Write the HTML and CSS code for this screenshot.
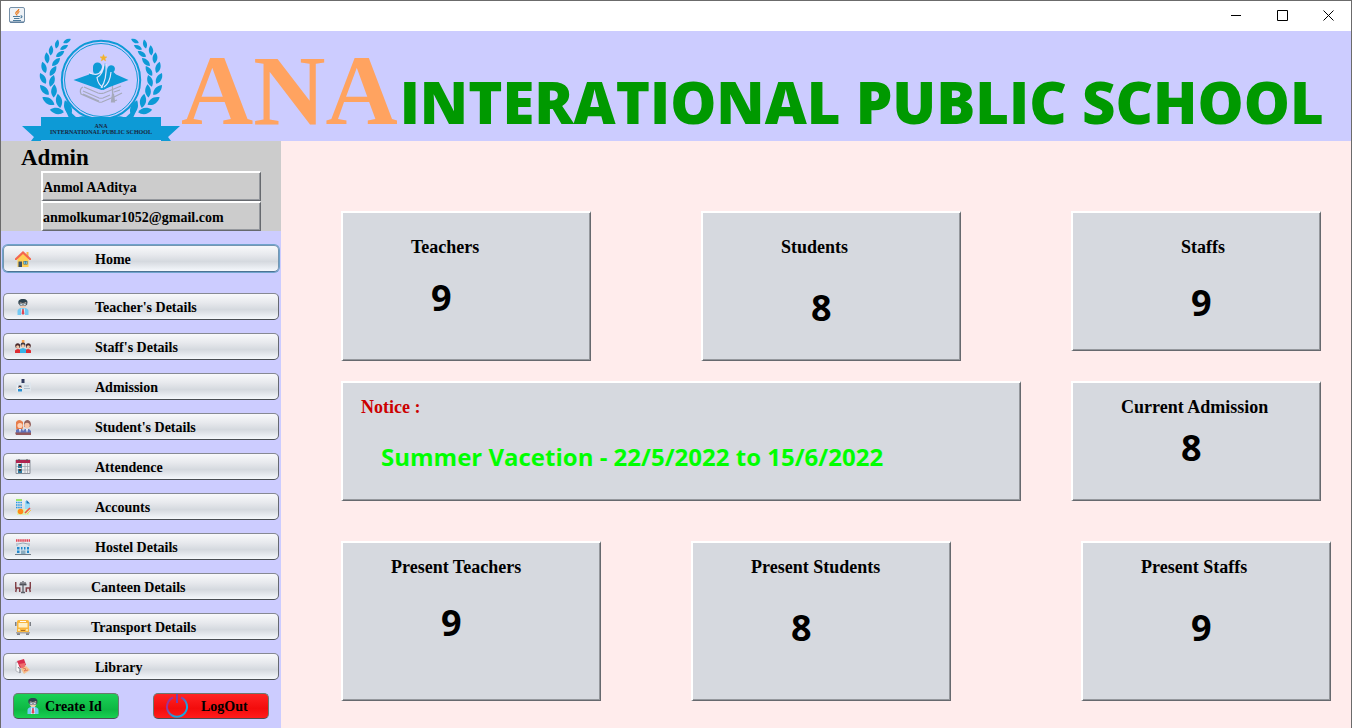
FILE: index.html
```html
<!DOCTYPE html>
<html lang="en">
<head>
<meta charset="utf-8">
<title>ANA Interational Public School</title>
<link rel="stylesheet" href="styles.css">
</head>
<body>
<div class="window">
  <div class="titlebar">
    <svg class="app-icon" viewBox="0 0 16 16" aria-hidden="true">
      <rect x=".5" y=".5" width="15" height="15" rx="1.5" fill="#eef2f6" stroke="#7690a8"/>
      <path d="M1 15h14" stroke="#4f7394" stroke-width="1"/>
      <path d="M9.8 2C10 4 6.500 4.500 6.800 6.200 7 7.200 8 7.600 8 8.600M10.500 4.500C8.500 5.300 8.500 6 9 7" fill="none" stroke="#e8791d" stroke-width="1.200"/>
      <path d="M4 9.500h7M5 11.500h5.500M4 13.500h8M11.500 9c2-.6 2 1.500 0 2" fill="none" stroke="#4d7b9c" stroke-width="1.100"/>
    </svg>
    <div class="window-controls">
      <button type="button" aria-label="Minimize"><svg viewBox="0 0 11 11"><path d="M0 5.500h10"/></svg></button>
      <button type="button" aria-label="Maximize"><svg viewBox="0 0 11 11"><path d="M.5 .5h10v10h-10z"/></svg></button>
      <button type="button" aria-label="Close"><svg viewBox="0 0 11 11"><path d="M.5 .5l10 10M10.500 .5l-10 10"/></svg></button>
    </div>
  </div>

  <header class="banner">
    <svg class="logo" viewBox="20 31 161 110" role="img" aria-label="School crest">
      <defs>
        <path id="leaf" d="M0-5.200C3.200-1.500 2.600 2.500 0 5 -2.600 2.500-3.200-1.500 0-5.200z"/>
        <g id="branch" fill="#0d9ad6">
          <use href="#leaf" transform="translate(67 41) rotate(62) scale(.85)"/>
          <use href="#leaf" transform="translate(57 44) rotate(12) scale(.9)"/>
          <use href="#leaf" transform="translate(64 47.500) rotate(62) scale(.9)"/>
          <use href="#leaf" transform="translate(51 50.500) rotate(5) scale(1)"/>
          <use href="#leaf" transform="translate(60 54) rotate(55) scale(1)"/>
          <use href="#leaf" transform="translate(47 58) rotate(-6) scale(1.100)"/>
          <use href="#leaf" transform="translate(56 62) rotate(45) scale(1.100)"/>
          <use href="#leaf" transform="translate(44 67.500) rotate(-16) scale(1.150)"/>
          <use href="#leaf" transform="translate(53 71) rotate(33) scale(1.150)"/>
          <use href="#leaf" transform="translate(43 78.500) rotate(-28) scale(1.200)"/>
          <use href="#leaf" transform="translate(52 81) rotate(18) scale(1.200)"/>
          <use href="#leaf" transform="translate(44.500 90) rotate(-42) scale(1.300)"/>
          <use href="#leaf" transform="translate(54 91) rotate(4) scale(1.300)"/>
          <use href="#leaf" transform="translate(48.500 101) rotate(-58) scale(1.400)"/>
          <use href="#leaf" transform="translate(59 101) rotate(-10) scale(1.400)"/>
          <use href="#leaf" transform="translate(57 111) rotate(-80) scale(1.400)"/>
          <use href="#leaf" transform="translate(68 108) rotate(-22) scale(1.600)"/>
          <path d="M64 105q7 8 13 13h-8q-3-6-5-13zM77 118q4-3 9-1z"/>
        </g>
      </defs>
      <use href="#branch"/>
      <use href="#branch" transform="translate(202 0) scale(-1 1)"/>
      <circle cx="101" cy="80" r="39.200" fill="#ccf" stroke="#0d9ad6" stroke-width="2"/>
      <circle cx="101" cy="80" r="36.500" fill="none" stroke="#0d9ad6" stroke-width="1"/>
      <g fill="none" stroke="#a5a9bb" stroke-width="1.200">
        <path d="M83 87q-4 2-2 7l18 8q1 .5 3 0l14-6M84 87l14 6q3 1 6 0l17-7M83 91l16 7q2 .5 4 0l7-3M83 94l16 7M114 97l8-4M114 92l6-2M114 101l3-1"/>
        <path d="M112.500 85v9l-1 8h3l-1-8" fill="#a5a9bb"/>
      </g>
      <path d="M73.500 80l17-6 8-1 12-1 18 8-27 10z" fill="#0d9ad6"/>
      <path d="M93 67a4.500 4.500 0 0 1 9 0q0 3-3 5 4-1 6-9 2 6 1.500 9l1-4a3.800 3.800 0 1 1 6 4q3 2 3 5-2 8-13 13-10-3-9-10-6 0-5.500-7 2 3 5 1-1.500-3-1-7z" fill="#0d9ad6"/>
      <path d="M89 72.500q12 6 15-8-1 10-7 13 1 7 6 10M106 64q1 16-5 24M111 72q-1 11-7 15" fill="none" stroke="#e3e6ff" stroke-width="1.200"/>
      <path d="M103.500 54.500l1 2.300 2.400.1-1.900 1.600.7 2.400-2.200-1.300-2.200 1.300.7-2.400-1.900-1.600 2.400-.1z" fill="#f2b32e" stroke="#f2b32e" stroke-width=".5"/>
      <path d="M22 126h19v15H31l3-4zM180 126h-19v15h10l-3-4zM41 117h120v23H41z" fill="#0d9ad6"/>
      <g class="logo-text" fill="#1a2540" text-anchor="middle">
        <text x="101" y="128">ANA</text>
        <text x="101" y="134">INTERNATIONAL PUBLIC SCHOOL</text>
      </g>
    </svg>
    <h1 class="school-name"><span class="school-short">ANA</span><span class="school-long">INTERATIONAL PUBLIC SCHOOL</span></h1>
  </header>

  <div class="body">
    <aside class="sidebar">
      <section class="profile">
        <h2>Admin</h2>
        <div class="profile-field">Anmol AAditya</div>
        <div class="profile-field">anmolkumar1052@gmail.com</div>
      </section>

      <nav class="menu">
        <button type="button" class="nav-button current"><svg viewBox="0 0 16 16"><path d="M2.500 7.500v8.500h11V7.500L8 2z" fill="#ffcf55"/><path d="M11.500 1h2v5h-2z" fill="#f9b84a"/><path d="M0 9V7.500L8 0l8 7.500V9h-1.500L8 3 1.500 9z" fill="#f4674e"/><path d="M3.500 10.500h3.500V16H3.500z" fill="#3c5366"/><path d="M8.500 10h4v3.500h-4z" fill="#3f6578"/><path d="M9 10.500h1.300v2.500H9zM10.800 10.500h1.300v2.500h-1.300z" fill="#72bdd8"/></svg><span>Home</span></button>
        <button type="button" class="nav-button"><svg viewBox="0 0 16 16"><use href="#person"/></svg><span>Teacher's Details</span></button>
        <button type="button" class="nav-button"><svg viewBox="0 0 16 16"><path d="M6.800 1h2.600v3H6.800z" fill="#f6a04b"/><circle cx="2.700" cy="6.800" r="2.500" fill="#4b2a2a"/><circle cx="13.300" cy="6.800" r="2.500" fill="#4b2a2a"/><circle cx="2.700" cy="7.800" r="1.600" fill="#f2c6a5"/><circle cx="13.300" cy="7.800" r="1.600" fill="#f2c6a5"/><path d="M0 14v-2.500Q1 10 3 10t3 1.500V14zM10 14v-2.500Q11 10 13 10t3 1.500V14z" fill="#dd2c32"/><circle cx="8" cy="5.800" r="2.400" fill="#3d3945"/><circle cx="8" cy="7" r="1.700" fill="#f5caa8"/><path d="M5 14v-4l3-1 3 1v4z" fill="#35b3e8"/></svg><span>Staff's Details</span></button>
        <button type="button" class="nav-button"><svg viewBox="0 0 16 16"><path d="M1 3.500h15v9H1z" fill="#dfe6ed"/><path d="M6.500 0h3v4h-3z" fill="#303a5f"/><path d="M2.500 6h4.500v6.500H2.500z" fill="#f6f8fa"/><path d="M3.500 6.500h3V9h-3z" fill="#303348"/><path d="M4 8h2v1.500H4z" fill="#f0bd96"/><path d="M3 10h4v2.500H3z" fill="#288fd0"/><path d="M9 7h5M9 9.500h6" stroke="#aebdca"/></svg><span>Admission</span></button>
        <button type="button" class="nav-button"><svg viewBox="0 0 16 16"><path d="M1 9V3q3-4 7 0v6l-2 3H2z" fill="#e77d4c"/><path d="M9 5q0-4 4-4 3 1 3 5l-1 2H9z" fill="#93605c"/><circle cx="5" cy="6.500" r="2.600" fill="#ffd1b5"/><circle cx="12" cy="6.500" r="2.700" fill="#f9c5a8"/><path d="M1 14v-3l2-1h4l1 2 2-2h4l2 2v2z" fill="#5f73ba"/><path d="M4 10h2l-1 4zM11 10h2l-1 4z" fill="#fff"/><path d="M0 13.500h16V16H1z" fill="#92585b"/></svg><span>Student's Details</span></button>
        <button type="button" class="nav-button"><svg viewBox="0 0 16 16"><path d="M1 1h14v13.500H1z" fill="#ecedf0" stroke="#8a8f99"/><path d="M1 1h14v3H1z" fill="#b02450"/><path d="M4 0v2M12 0v2" stroke="#555"/><path d="M6.500 4v10M10 4v10M12.500 4v10M1 7.500h14M1 11h14" stroke="#9ca1a9" stroke-width=".7"/><path d="M3 5h4v4H3zM3 10h4v4H3z" fill="#327b9d"/><path d="M4 5h2v2H4zM4 10h2v2H4z" fill="#50382d"/></svg><span>Attendence</span></button>
        <button type="button" class="nav-button"><svg viewBox="0 0 16 16"><path d="M1 0h6v2H1z" fill="#9be36b"/><path d="M1 3.500h6M1 6h6M1 8.500h6" stroke="#2196e3" stroke-width="1.500" stroke-dasharray="1.500 .7"/><path d="M10 2h2l3 3v5h-5z" fill="#9bdcf6"/><path d="M11.500 1l3.500 3.500h-3.500z" fill="#1471b8"/><path d="M2 10h12v6H2z" fill="#d8f2b6"/><circle cx="5.500" cy="12.500" r="2.800" fill="#ff8a17"/><path d="M10 14l5-5" stroke="#f05240" stroke-width="1.600"/><path d="M12 15l4-4" stroke="#f0c45d"/></svg><span>Accounts</span></button>
        <button type="button" class="nav-button"><svg viewBox="0 0 16 16"><path d="M1 1.500h14" stroke="#e34455" stroke-width="2.500" stroke-dasharray="1.500 .6"/><path d="M3 5q5-2 10 0M2 4v3M14 4v3" fill="none" stroke="#98a9b7"/><path d="M1 7.500h14V15H1z" fill="#d5e3ed"/><path d="M2 8h2.500v2.500H2zM6 8h1.500v2.500H6zM9 8h1.500v2.500H9zM12 8h2v2.500h-2zM2 11.500h2.500V14H2zM12 11.500h2V14h-2z" fill="#2287cb"/><path d="M6 11.500h4.500V15H6z" fill="#8bacc0"/><path d="M0 15.500h16" stroke="#717b85"/></svg><span>Hostel Details</span></button>
        <button type="button" class="nav-button wide"><svg viewBox="0 0 16 16"><path d="M.7 3v6h4v4M1.500 9L.7 13M15.300 3v6h-4v4M14.500 9l.8 4" fill="none" stroke="#814047" stroke-width="1.500"/><path d="M4.500 5.500h7" stroke="#4a4d55" stroke-width="1.800"/><path d="M8 2v11M6 13.500h4M6 5V3M10 5V3" stroke="#5b5d65" stroke-width="1.300"/></svg><span>Canteen Details</span></button>
        <button type="button" class="nav-button wide"><svg viewBox="0 0 16 16"><path d="M0 3h1.500v4H0zM14.500 3H16v4h-1.500zM2 14h3v2H2zM11 14h3v2h-3z" fill="#7b7f85"/><rect x="2" y="1" width="12" height="13" rx="1.500" fill="#f9b63d"/><path d="M3.500 4h9v4.500h-9z" fill="#fff0c4"/><path d="M5 2.500h6" stroke="#fff"/><path d="M3 11h2M11 11h2" stroke="#fff4c9" stroke-width="1.500"/><path d="M1 13h14v1.500H1z" fill="#aaa6a5"/><path d="M6 11h4v1H6z" fill="#a76b21"/></svg><span>Transport Details</span></button>
        <button type="button" class="nav-button"><svg viewBox="0 0 16 16"><path d="M1 3l4 1v10l-4-2z" fill="#f6f7f8" stroke="#a8abb2" stroke-width=".7"/><path d="M2 2l7-2 2 6-6 3z" fill="#d92c4c"/><path d="M4 5l6-1v5l-3 1z" fill="#ef6c6c"/><path d="M6 10l5-3 4 4-6 4z" fill="#f5c18c"/><path d="M8 9l3 1-2 2 4-1" fill="none" stroke="#e0785d"/><path d="M3 8q3 2 2 6" fill="none" stroke="#737780"/></svg><span>Library</span></button>
      </nav>

      <div class="account-actions">
        <button type="button" class="action create"><svg viewBox="0 0 16 16"><g id="person"><path d="M3.500 4.500q-1-3.500 3-4.500 5.500-.5 6 3L12 6H4.500z" fill="#2f4350"/><path d="M4.800 3.500q4 1 6.400-.5V7Q10 9.500 8 9.500T4.800 7z" fill="#f4cbb0"/><path d="M5 4.500h2.500v2H5zM8.500 4.500H11v2H8.500z" fill="#c5dce8" stroke="#415b6d" stroke-width=".5"/><path d="M2.500 16v-4q0-2 3.500-3h4q3.500 1 3.500 3v4z" fill="#72c9f4"/><path d="M6 9l2 2 2-2v7H6z" fill="#cceafa"/><path d="M7.300 10h1.400l.6 4.500L8 16l-1.300-1.500z" fill="#df4855"/></g></svg><span>Create Id</span></button>
        <button type="button" class="action logout"><svg viewBox="0 0 24 24"><defs><linearGradient id="power" gradientUnits="userSpaceOnUse" x1="4" y1="4" x2="18" y2="20"><stop offset=".3" stop-color="#9b329b"/><stop offset=".8" stop-color="#16a7df"/></linearGradient></defs><path d="M8 3.500a10 10 0 1 0 8 0" fill="none" stroke="url(#power)" stroke-width="2"/><path d="M12 0v9" stroke="#7b3daa" stroke-width="2"/></svg><span>LogOut</span></button>
      </div>
    </aside>

    <main class="dashboard">
      <div class="row row-totals">
        <section class="card teachers"><h3>Teachers</h3><p class="count">9</p></section>
        <section class="card students"><h3>Students</h3><p class="count">8</p></section>
        <section class="card staffs"><h3>Staffs</h3><p class="count">9</p></section>
      </div>
      <div class="row row-notice">
        <section class="card notice"><h3>Notice :</h3><p class="notice-text">Summer Vacetion - 22/5/2022 to 15/6/2022</p></section>
        <section class="card admission"><h3>Current Admission</h3><p class="count">8</p></section>
      </div>
      <div class="row row-present">
        <section class="card present-teachers"><h3>Present Teachers</h3><p class="count">9</p></section>
        <section class="card present-students"><h3>Present Students</h3><p class="count">8</p></section>
        <section class="card present-staffs"><h3>Present Staffs</h3><p class="count">9</p></section>
      </div>
    </main>
  </div>
</div>
</body>
</html>
```
FILE: styles.css
```css
* { box-sizing: border-box; }

body {
  margin: 0;
  font-family: "Liberation Serif", "Times New Roman", serif;
  font-weight: bold;
  color: #000;
}

h1, h2, h3, p { margin: 0; font-weight: bold; }

button { font: inherit; color: inherit; cursor: pointer; }

.window {
  display: flex;
  flex-direction: column;
  min-height: 100vh;
  border: 1px solid #6b6b6b;
  border-bottom: 0;
}

/* Title bar */
.titlebar {
  display: flex;
  align-items: center;
  justify-content: space-between;
  height: 30px;
  padding-left: 8px;
  background: #fff;
}
.app-icon { width: 16px; height: 16px; margin-bottom: 2px; }
.window-controls { display: flex; height: 100%; }
.window-controls button {
  display: grid;
  place-items: center;
  width: 46px;
  padding: 0 0 2px;
  border: 0;
  background: none;
}
.window-controls svg {
  width: 11px;
  height: 11px;
  fill: none;
  stroke: #000;
}

/* Banner */
.banner {
  display: flex;
  min-height: 110px;
  padding-left: 19px;
  background: #ccf;
}
.logo { flex: none; width: 161px; height: 110px; }
.logo-text { font: bold 6px "Liberation Serif", serif; }
.school-name {
  display: flex;
  align-items: baseline;
  gap: 2px;
  padding-top: 10px;
  white-space: nowrap;
}
.school-short { font-size: 100px; line-height: 100px; color: #ffa360; }
.school-long {
  font-family: "Open Sans", "Noto Sans", sans-serif;
  font-size: 58px;
  font-weight: 800;
  line-height: 60px;
  color: #090;
}

.body { display: flex; flex: 1; }

/* Sidebar */
.sidebar { flex: none; width: 280px; background: #ccf; font-size: 14px; }
.profile { padding-left: 40px; background: #ccc; }
.profile h2 {
  margin-left: -20px;
  padding-top: 4px;
  font-size: 23px;
  line-height: 26px;
}
.profile-field {
  width: 220px;
  height: 30px;
  padding-top: 2px;
  line-height: 26px;
}
.profile-field,
.card {
  border: solid #fff;
  border-width: 2px 1px 1px 2px;
  border-right-color: #66696e;
  border-bottom-color: #66696e;
  box-shadow: inset -1px -1px #95989d;
}
.menu {
  display: flex;
  flex-direction: column;
  gap: 13px;
  padding: 14px 2px 13px;
}
.nav-button {
  display: flex;
  align-items: center;
  gap: 64px;
  height: 27px;
  padding: 0 11px;
  border: 1px solid #868993;
  border-right-color: #666a72;
  border-bottom-color: #4b4f55;
  border-radius: 5px;
  background: linear-gradient(#f8f9fb, #e7e9ed 35%, #d5d9df 62%, #f5f8fc);
}
.nav-button.wide { gap: 60px; }
.nav-button.current {
  margin-bottom: 8px;
  box-shadow: 0 0 0 1px #6fa3cc;
  border-color: #7496b2;
  border-bottom-color: #4c7394;
}
.nav-button svg { width: 16px; height: 16px; }
.nav-button span,
.action span { padding-top: 2px; }

.account-actions {
  display: flex;
  justify-content: space-between;
  padding: 0 12px;
}
.action {
  display: flex;
  align-items: center;
  height: 26px;
  border: 1px solid #6c786f;
  border-bottom-color: #4b4f55;
  border-radius: 5px;
}
.create {
  gap: 4px;
  width: 106px;
  padding: 0 11px;
  background: linear-gradient(#1bd158, #0db743 65%, #18d052);
}
.create svg { width: 16px; height: 16px; }
.logout {
  gap: 12px;
  width: 116px;
  padding: 0 11px;
  background: linear-gradient(#ff2424, #f30c0c 60%, #ff1c1c);
}
.logout svg { width: 24px; height: 24px; }

/* Dashboard */
.dashboard {
  flex: 1;
  min-width: 0;
  padding: 70px 20px 27px 60px;
  background: #ffecec;
}
.row { display: grid; align-items: start; }
.row-totals {
  grid-template-columns: 25fr 26fr 25fr;
  column-gap: 110px;
  margin: 0 10px 20px 0;
}
.row-notice {
  grid-template-columns: 68fr 25fr;
  column-gap: 50px;
  margin: 0 10px 40px 0;
}
.row-present { grid-template-columns: 26fr 26fr 29fr; column-gap: 90px; }

.card {
  min-height: 150px;
  padding-top: 14px;
  background: #d6d9df;
}
.card h3 { font-size: 18px; line-height: 20px; }
.count {
  font-family: "Open Sans", "Noto Sans", sans-serif;
  font-size: 36px;
  line-height: 42px;
}
.row-totals .card { padding-top: 24px; }
.row-notice .card { min-height: 120px; }
.row-present .card { min-height: 160px; }

.teachers { padding-left: 68px; }
.teachers .count { padding: 20px 0 0 20px; }
.students { padding-left: 78px; }
.students .count { padding: 30px 0 0 30px; }
.row-totals .staffs { min-height: 140px; padding-left: 108px; }
.staffs .count { padding: 25px 0 0 10px; }
.admission { padding-left: 48px; }
.admission .count { padding: 10px 0 0 60px; }
.present-teachers { padding-left: 48px; }
.present-teachers .count { padding: 25px 0 0 50px; }
.present-students { padding-left: 58px; }
.present-students .count { padding: 30px 0 0 40px; }
.present-staffs { margin-left: 40px; padding-left: 58px; }
.present-staffs .count { padding: 30px 0 0 50px; }

.notice { padding-left: 18px; }
.notice h3 { color: #c00; }
.notice-text {
  padding: 25px 0 0 20px;
  font-family: "Open Sans", "Noto Sans", sans-serif;
  font-size: 24px;
  line-height: 30px;
  color: #0f0;
}
```
